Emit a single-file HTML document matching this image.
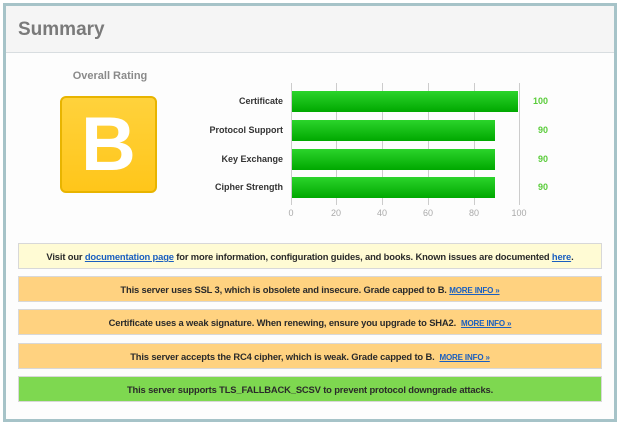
<!DOCTYPE html>
<html><head><style>
body{margin:0;width:620px;height:423px;background:#fff;font-family:"Liberation Sans",sans-serif;position:relative;overflow:hidden}
.frame{position:absolute;left:3px;top:3px;width:608px;height:413px;border:3px solid #a6c3c8;background:#fdfdfd}
.abs{position:absolute}
.ov{left:45px;top:70px;width:130px;text-align:center;font-size:11px;font-weight:bold;color:#8a8a8a}
.grade{left:60px;top:96px;width:93px;height:93px;border:2px solid #e8b400;border-radius:6px;background:linear-gradient(#ffd23c,#ffc61a);color:#fff;font-size:76px;font-weight:bold;text-align:center;line-height:93px}
.lbl{width:150px;text-align:right;font-size:9px;font-weight:bold;color:#333;left:133px}
.grid{width:1px;top:83px;height:122px;background:#ccc}
.bar{left:292px;height:21px;background:linear-gradient(#2bd42b,#00a800)}
.val{font-size:9px;color:#5acc3a;font-weight:bold;width:40px;text-align:right;left:508px}
.ax{font-size:9px;color:#aaa;top:208px;width:30px;text-align:center}
.box{position:absolute;left:18px;width:582px;height:24px;border:1px solid #d8d8d8;text-align:center;font-size:9.4px;font-weight:bold;line-height:25px;color:#2a2a2a;letter-spacing:-0.15px}
.box a{color:#1a5fc0;text-decoration:underline}
.mi{font-size:8px;font-weight:bold}
</style></head><body>
<div class="frame"></div>
<div class="abs" style="left:6px;top:6px;width:608px;height:46px;background:#f5f5f5;border-bottom:1px solid #d8dde0"><span style="position:absolute;left:12px;top:13px;font-size:19px;font-weight:bold;color:#7a7a7a">Summary</span></div>
<div class="abs ov">Overall Rating</div>
<div class="abs grade">B</div>
<div class="abs grid" style="left:291px"></div>
<div class="abs grid" style="left:336px"></div>
<div class="abs grid" style="left:382px"></div>
<div class="abs grid" style="left:428px"></div>
<div class="abs grid" style="left:474px"></div>
<div class="abs grid" style="left:519px"></div>
<div class="abs lbl" style="top:96px">Certificate</div>
<div class="abs lbl" style="top:125px">Protocol Support</div>
<div class="abs lbl" style="top:154px">Key Exchange</div>
<div class="abs lbl" style="top:182px">Cipher Strength</div>
<div class="abs bar" style="top:91px;width:226px"></div>
<div class="abs bar" style="top:120px;width:203px"></div>
<div class="abs bar" style="top:149px;width:203px"></div>
<div class="abs bar" style="top:177px;width:203px"></div>
<div class="abs val" style="top:96px">100</div>
<div class="abs val" style="top:125px">90</div>
<div class="abs val" style="top:154px">90</div>
<div class="abs val" style="top:182px">90</div>
<div class="abs ax" style="left:276px">0</div>
<div class="abs ax" style="left:321px">20</div>
<div class="abs ax" style="left:367px">40</div>
<div class="abs ax" style="left:413px">60</div>
<div class="abs ax" style="left:459px">80</div>
<div class="abs ax" style="left:504px">100</div>
<div class="box" style="top:243px;background:#fffbd4">Visit our <a>documentation page</a> for more information, configuration guides, and books. Known issues are documented <a>here</a>.</div>
<div class="box" style="top:276px;background:#ffd280">This server uses SSL 3, which is obsolete and insecure. Grade capped to B. <a class="mi">MORE INFO »</a></div>
<div class="box" style="top:309px;background:#ffd280">Certificate uses a weak signature. When renewing, ensure you upgrade to SHA2. &nbsp;<a class="mi">MORE INFO »</a></div>
<div class="box" style="top:343px;background:#ffd280">This server accepts the RC4 cipher, which is weak. Grade capped to B. &nbsp;<a class="mi">MORE INFO »</a></div>
<div class="box" style="top:376px;background:#7ed850">This server supports TLS_FALLBACK_SCSV to prevent protocol downgrade attacks.</div>
</body></html>
